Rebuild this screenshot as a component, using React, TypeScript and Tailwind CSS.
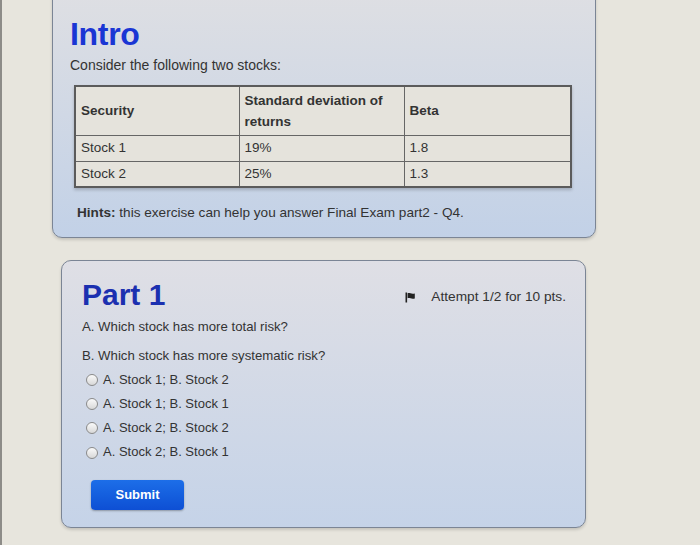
import React from "react";

const rows = [
  { name: "Stock 1", sd: "19%", beta: "1.8" },
  { name: "Stock 2", sd: "25%", beta: "1.3" },
];

const options = [
  "A. Stock 1; B. Stock 2",
  "A. Stock 1; B. Stock 1",
  "A. Stock 2; B. Stock 2",
  "A. Stock 2; B. Stock 1",
];

const Flag = () => (
  <svg width="11" height="11" viewBox="0 0 11 11" className="shrink-0">
    <rect x="0.5" y="0.5" width="1.6" height="10" fill="#222" />
    <path d="M2.6 1.2 C4.5 0.4 6.3 2.4 9.8 1.4 L9.8 6.4 C6.3 7.4 4.5 5.4 2.6 6.2 Z" fill="#222" />
  </svg>
);

export default function App() {
  return (
    <div
      className="w-[700px] h-[545px] overflow-hidden bg-[#e7e5dd] border-l-2 border-[#8d8c88] text-[#333]"
      style={{ fontFamily: '"Liberation Sans", Arial, sans-serif' }}
    >
      <section className="ml-[50px] mt-[-8px] w-[544px] h-[246px] rounded-b-[10px] border border-[#7b8595] bg-gradient-to-b from-[#dedfe3] to-[#c2d1e7] shadow-[0_2px_3px_rgba(0,0,0,0.15)] pl-[17px] pr-[20px] pt-[23px]">
        <h1 className="text-[32px] leading-[36px] font-bold text-[#1a36d4] tracking-[-0.3px]">Intro</h1>
        <p className="mt-[4px] text-[14px] leading-[18px]">Consider the following two stocks:</p>
        <table className="mt-[11px] ml-[4px] w-[498px] border-collapse border-2 border-[#5b5b5b] bg-[#e5e3dc] text-[13.5px] shadow-[0_2px_3px_rgba(0,0,0,0.2)]">
          <thead>
            <tr className="h-[49px]">
              <th className="w-[164px] border border-[#666] px-[5px] text-left font-bold">Security</th>
              <th className="w-[165px] border border-[#666] px-[5px] text-left font-bold leading-[21px]">
                Standard deviation of
                <br />
                returns
              </th>
              <th className="border border-[#666] px-[5px] text-left font-bold">Beta</th>
            </tr>
          </thead>
          <tbody>
            {rows.map((r) => (
              <tr key={r.name} className="h-[26px]">
                <td className="border border-[#666] px-[5px]">{r.name}</td>
                <td className="border border-[#666] px-[5px]">{r.sd}</td>
                <td className="border border-[#666] px-[5px]">{r.beta}</td>
              </tr>
            ))}
          </tbody>
        </table>
        <p className="mt-[15px] ml-[7px] text-[13.6px]">
          <span className="font-bold">Hints:</span> this exercise can help you answer Final Exam part2 - Q4.
        </p>
      </section>

      <section className="mt-[22px] ml-[59px] w-[525px] h-[268px] rounded-[10px] border border-[#7b8595] bg-gradient-to-b from-[#dfdfe5] to-[#c5d3e8] shadow-[0_2px_3px_rgba(0,0,0,0.15)] pl-[20px] pr-[19px] pt-[17px]">
        <div className="flex justify-between items-start">
          <h2 className="text-[30px] leading-[34px] font-bold text-[#1b30b0]">Part 1</h2>
          <div className="mt-[9px] flex items-center gap-[15px] text-[13.7px]">
            <Flag />
            <span>Attempt 1/2 for 10 pts.</span>
          </div>
        </div>
        <p className="mt-[5px] text-[13.2px]">A. Which stock has more total risk?</p>
        <p className="mt-[9px] text-[13.2px]">B. Which stock has more systematic risk?</p>
        <div className="mt-[6px] ml-[4px] flex flex-col gap-[8px]">
          {options.map((o) => (
            <label key={o} className="flex items-center gap-[5px] text-[13px] leading-[16.3px]">
              <span className="w-[12px] h-[12px] rounded-full border border-[#8a8a8a] bg-gradient-to-b from-[#fafafa] to-[#d8d8d8]" />
              {o}
            </label>
          ))}
        </div>
        <button className="mt-[19px] ml-[9px] w-[93px] h-[30px] rounded-[4px] bg-gradient-to-b from-[#1d6ee8] to-[#0e4fd4] text-white text-[13px] font-bold shadow-[0_1px_2px_rgba(0,0,0,0.3)]">
          Submit
        </button>
      </section>
    </div>
  );
}
